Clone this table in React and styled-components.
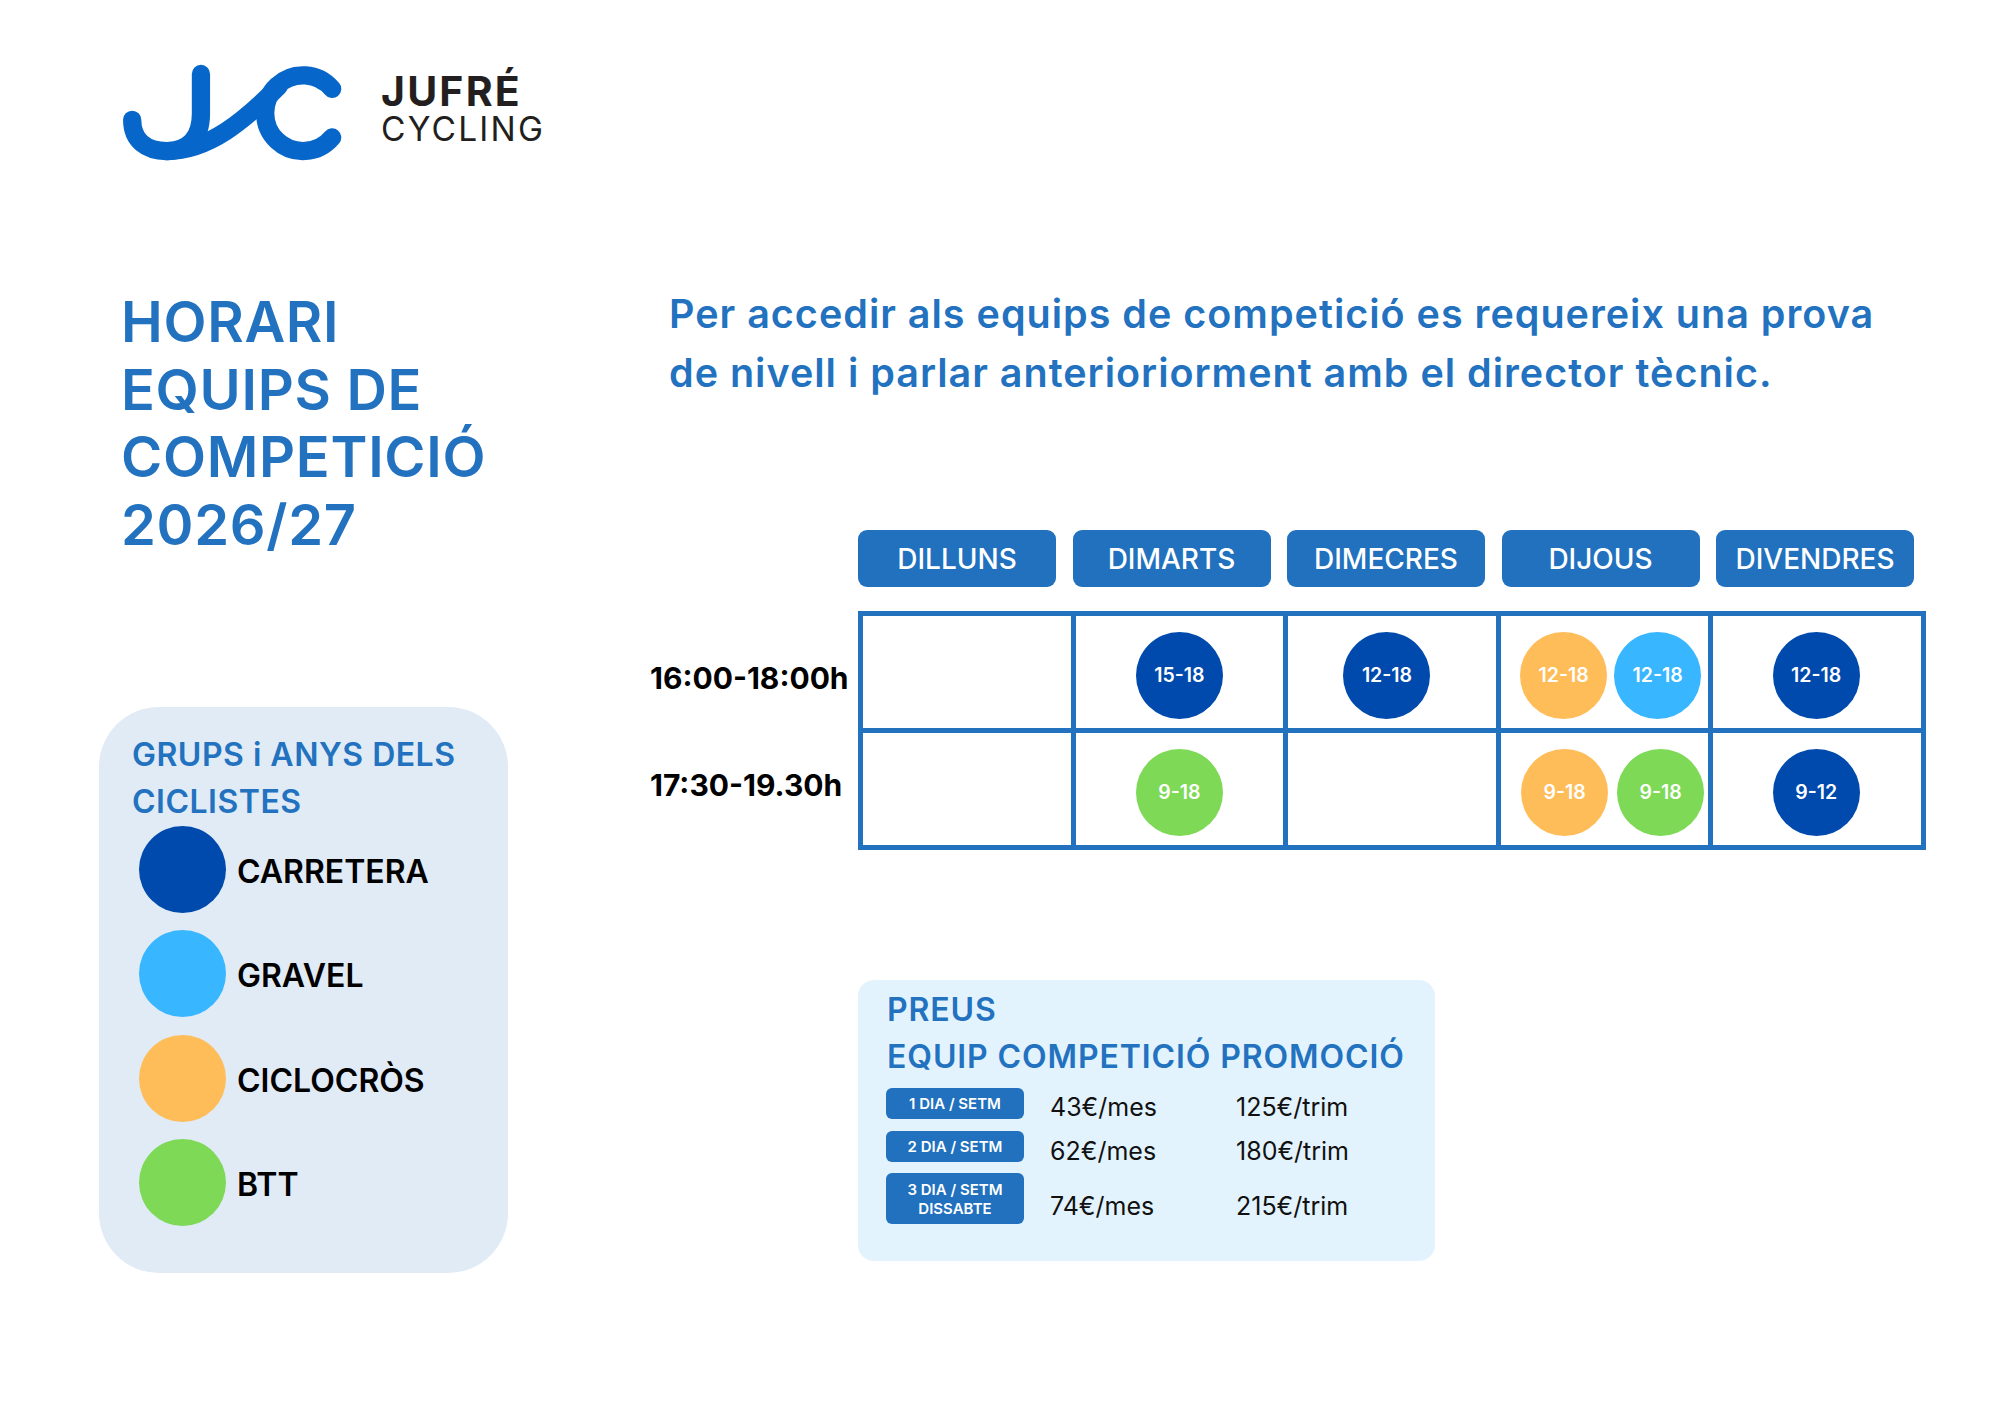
import React from "react";
import styled, { createGlobalStyle } from "styled-components";

const BLUE = "#2272c0";
const BOX = "#2171be";
const INK = "#231f20";

const COLORS = {
  road: "#004aad",
  gravel: "#38b6ff",
  cx: "#ffbd59",
  mtb: "#7ed957",
};

const Global = createGlobalStyle`
  html, body { margin: 0; padding: 0; background: #fff; }
  body { font-family: "Inter", "Liberation Sans", sans-serif; }
  * { box-sizing: border-box; }
`;

const Page = styled.div`
  width: 2000px;
  height: 1414px;
  background: #fff;
  display: flex;
  flex-direction: column;
  overflow: hidden;
`;

const Header = styled.header`
  display: flex;
  align-items: flex-start;
  gap: 38px;
  padding: 64px 0 0 122px;
`;

const LogoMark = styled.svg`
  width: 221px;
  height: 97px;
  flex: none;
  display: block;
`;

const Brand = styled.div`
  margin-top: 5px;
  display: flex;
  flex-direction: column;
  gap: 1px;
  color: ${INK};
`;

const BrandName = styled.span`
  font-size: 41px;
  line-height: 44px;
  font-weight: 700;
  letter-spacing: 2.2px;
`;

const BrandSub = styled.span`
  font-size: 33.5px;
  line-height: 30px;
  font-weight: 400;
  letter-spacing: 2.2px;
`;

const Body = styled.main`
  margin-top: 123px;
  padding-left: 99px;
  display: grid;
  grid-template-columns: 551px 1fr;
`;

const LeftCol = styled.section`
  display: flex;
  flex-direction: column;
  align-items: flex-start;
`;

const Headline = styled.h1`
  margin: 5px 0 0 22px;
  font-size: 56px;
  line-height: 67.7px;
  font-weight: 600;
  letter-spacing: 0.7px;
  color: ${BLUE};
  white-space: nowrap;
`;

const LegendCard = styled.div`
  margin-top: 147px;
  width: 409px;
  height: 566px;
  border-radius: 60px;
  background: #e0ebf6;
  padding: 24px 0 0 33px;
`;

const LegendTitle = styled.h2`
  margin: 0;
  font-size: 32px;
  line-height: 47px;
  font-weight: 600;
  letter-spacing: 0.5px;
  color: ${BLUE};
  white-space: nowrap;
`;

const LegendList = styled.ul`
  list-style: none;
  margin: 1px 0 0;
  padding: 0 0 0 7px;
  display: flex;
  flex-direction: column;
  gap: 17.5px;
`;

const LegendItem = styled.li`
  display: flex;
  align-items: center;
  gap: 11px;
`;

const Dot = styled.span`
  width: 87px;
  height: 87px;
  border-radius: 50%;
  flex: none;
  background: ${(p) => p.$color};
`;

const LegendLabel = styled.span`
  margin-top: 4px;
  font-size: 32px;
  font-weight: 600;
  color: #000;
`;

const RightCol = styled.section`
  display: flex;
  flex-direction: column;
  align-items: flex-start;
`;

const Intro = styled.p`
  margin: 0.5px 0 0 19px;
  font-size: 39.5px;
  line-height: 59px;
  font-weight: 600;
  letter-spacing: 1px;
  color: ${BLUE};
  white-space: nowrap;
`;

const Schedule = styled.div`
  margin-top: 127.5px;
  display: grid;
  grid-template-columns: 208px 1068px;
  row-gap: 24px;
`;

const DayRow = styled.div`
  grid-column: 2;
  display: grid;
  grid-template-columns: repeat(5, 198px);
  column-gap: 16.5px;
`;

const DayBox = styled.div`
  height: 57px;
  border-radius: 9px;
  background: ${BOX};
  color: #fff;
  font-size: 28px;
  font-weight: 500;
  display: flex;
  align-items: center;
  justify-content: center;
`;

const Labels = styled.div`
  grid-column: 1;
  display: flex;
  flex-direction: column;
  gap: 5px;
  padding: 5px 0;
`;

const TimeLabel = styled.div`
  height: 112px;
  display: flex;
  align-items: center;
  font-size: 30px;
  font-weight: 700;
  color: #000;
  white-space: nowrap;
  padding-top: ${(p) => p.$pt || 0}px;
  padding-bottom: ${(p) => p.$pb || 0}px;
`;

const Table = styled.div`
  grid-column: 2;
  display: grid;
  grid-template-columns: repeat(5, 1fr);
  grid-auto-rows: 112px;
  gap: 5px;
  padding: 5px;
  background: ${BLUE};
`;

const Cell = styled.div`
  background: #fff;
  display: flex;
  align-items: center;
  justify-content: center;
  gap: ${(p) => p.$gap || 7}px;
  padding-top: 6px;
  padding-left: ${(p) => Math.max(0, p.$dx || 0) * 2}px;
  padding-right: ${(p) => Math.max(0, -(p.$dx || 0)) * 2}px;
`;

const Bubble = styled.span`
  width: 87px;
  height: 87px;
  flex: none;
  border-radius: 50%;
  background: ${(p) => p.$color};
  color: #fff;
  font-size: 19.5px;
  font-weight: 600;
  display: flex;
  align-items: center;
  justify-content: center;
`;

const PriceCard = styled.div`
  margin: 130px 0 0 208px;
  width: 577px;
  border-radius: 16px;
  background: #e3f3fe;
  padding: 6px 0 37px 28px;
`;

const PriceTitle = styled.h3`
  margin: 0 0 0 1px;
  font-size: 32px;
  line-height: 47px;
  font-weight: 600;
  letter-spacing: 0.9px;
  color: ${BLUE};
  white-space: nowrap;
`;

const PriceRows = styled.div`
  margin-top: 8px;
  display: flex;
  flex-direction: column;
  gap: 11.5px;
`;

const PriceRow = styled.div`
  display: grid;
  grid-template-columns: 164px 186px auto;
  grid-template-rows: ${(p) => p.$h}px;
  align-items: center;
`;

const Badge = styled.div`
  width: 138px;
  height: 100%;
  border-radius: 6px;
  background: ${BOX};
  color: #fff;
  font-size: 15px;
  line-height: 19px;
  font-weight: 600;
  text-align: center;
  display: flex;
  flex-direction: column;
  align-items: center;
  justify-content: center;
`;

const Price = styled.span`
  font-size: 25px;
  line-height: 25px;
  font-weight: 400;
  color: #111;
  white-space: nowrap;
  padding-top: ${(p) => p.$pt}px;
`;

const legend = [
  { label: "CARRETERA", color: COLORS.road },
  { label: "GRAVEL", color: COLORS.gravel },
  { label: "CICLOCRÒS", color: COLORS.cx },
  { label: "BTT", color: COLORS.mtb },
];

const days = ["DILLUNS", "DIMARTS", "DIMECRES", "DIJOUS", "DIVENDRES"];

const rows = [
  {
    time: "16:00-18:00h",
    pt: 11,
    pb: 0,
    cells: [
      { items: [] },
      { items: [["15-18", COLORS.road]] },
      { items: [["12-18", COLORS.road]], dx: -5 },
      {
        items: [
          ["12-18", COLORS.cx],
          ["12-18", COLORS.gravel],
        ],
        dx: 6,
      },
      { items: [["12-18", COLORS.road]], dx: -1 },
    ],
  },
  {
    time: "17:30-19.30h",
    pt: 0,
    pb: 9,
    cells: [
      { items: [] },
      { items: [["9-18", COLORS.mtb]] },
      { items: [] },
      {
        items: [
          ["9-18", COLORS.cx],
          ["9-18", COLORS.mtb],
        ],
        dx: 8,
        gap: 9,
      },
      { items: [["9-12", COLORS.road]], dx: -1 },
    ],
  },
];

const prices = [
  { lines: ["1 DIA / SETM"], h: 31, month: "43€/mes", trim: "125€/trim", pt: 7 },
  { lines: ["2 DIA / SETM"], h: 31, month: "62€/mes", trim: "180€/trim", pt: 10 },
  { lines: ["3 DIA / SETM", "DISSABTE"], h: 51, month: "74€/mes", trim: "215€/trim", pt: 16 },
];

function Logo() {
  return (
    <LogoMark viewBox="128 100 664 292">
      <g fill="none" stroke="#0766c9" strokeWidth="55" strokeLinecap="round" strokeLinejoin="round">
        <path d="M365,130 L365,250 C365,325 325,362 262,362 C200,362 158,330 158,268" />
        <path d="M262,362 C390,362 499,267 599,167" />
        <path d="M760,175 A114,114 0 1 0 760,321" />
      </g>
    </LogoMark>
  );
}

export default function App() {
  return (
    <>
      <Global />
      <Page>
        <Header>
          <Logo />
          <Brand>
            <BrandName>JUFRÉ</BrandName>
            <BrandSub>CYCLING</BrandSub>
          </Brand>
        </Header>
        <Body>
          <LeftCol>
            <Headline>
              HORARI
              <br />
              EQUIPS DE
              <br />
              COMPETICIÓ
              <br />
              2026/27
            </Headline>
            <LegendCard>
              <LegendTitle>
                GRUPS i ANYS DELS
                <br />
                CICLISTES
              </LegendTitle>
              <LegendList>
                {legend.map((l) => (
                  <LegendItem key={l.label}>
                    <Dot $color={l.color} />
                    <LegendLabel>{l.label}</LegendLabel>
                  </LegendItem>
                ))}
              </LegendList>
            </LegendCard>
          </LeftCol>
          <RightCol>
            <Intro>
              Per accedir als equips de competició es requereix una prova
              <br />
              de nivell i parlar anterioriorment amb el director tècnic.
            </Intro>
            <Schedule>
              <DayRow>
                {days.map((d) => (
                  <DayBox key={d}>{d}</DayBox>
                ))}
              </DayRow>
              <Labels>
                {rows.map((r) => (
                  <TimeLabel key={r.time} $pt={r.pt} $pb={r.pb}>
                    {r.time}
                  </TimeLabel>
                ))}
              </Labels>
              <Table>
                {rows.map((r, ri) =>
                  r.cells.map((c, ci) => (
                    <Cell key={`${ri}-${ci}`} $dx={c.dx} $gap={c.gap}>
                      {c.items.map(([txt, col], bi) => (
                        <Bubble key={bi} $color={col}>
                          {txt}
                        </Bubble>
                      ))}
                    </Cell>
                  ))
                )}
              </Table>
            </Schedule>
            <PriceCard>
              <PriceTitle>PREUS</PriceTitle>
              <PriceTitle>EQUIP COMPETICIÓ PROMOCIÓ</PriceTitle>
              <PriceRows>
                {prices.map((p) => (
                  <PriceRow key={p.month} $h={p.h}>
                    <Badge>
                      {p.lines.map((t) => (
                        <span key={t}>{t}</span>
                      ))}
                    </Badge>
                    <Price $pt={p.pt}>{p.month}</Price>
                    <Price $pt={p.pt}>{p.trim}</Price>
                  </PriceRow>
                ))}
              </PriceRows>
            </PriceCard>
          </RightCol>
        </Body>
      </Page>
    </>
  );
}
